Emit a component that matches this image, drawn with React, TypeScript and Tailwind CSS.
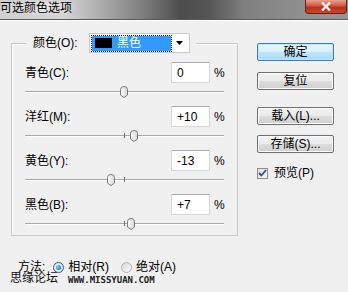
import React from 'react';

const rows = [
  { label: '青色(C):', value: '0', v: 0 },
  { label: '洋红(M):', value: '+10', v: 10 },
  { label: '黄色(Y):', value: '-13', v: -13 },
  { label: '黑色(B):', value: '+7', v: 7 },
];

function Thumb() {
  return (
    <svg width="8" height="12" viewBox="0 0 8 12">
      <defs>
        <linearGradient id="tg" x1="0" y1="0" x2="1" y2="0">
          <stop offset="0" stopColor="#ffffff" />
          <stop offset="1" stopColor="#d6d6d6" />
        </linearGradient>
      </defs>
      <path d="M0.5 3.5 Q0.5 0.5 4 0.5 Q7.5 0.5 7.5 3.5 V9 L4 11.5 L0.5 9 Z" fill="url(#tg)" stroke="#7a7a7a" />
    </svg>
  );
}

function Slider({ v }: { v: number }) {
  const left = 99 + v * 0.99 - 4;
  return (
    <div className="relative h-[20px]">
      <div className="pt-[8px]">
        <div className="h-[2px] border-t border-[#a8a8a8] bg-white" />
      </div>
      {v !== 0 && <div className="absolute left-[99px] top-[6px] w-px h-[5px] bg-[#707070]" />}
      <div className="absolute top-[3px] leading-none" style={{ left }}>
        <Thumb />
      </div>
    </div>
  );
}

function Btn({ label, primary }: { label: string; primary?: boolean }) {
  return (
    <div
      className={`h-[18px] w-[77px] rounded-[2px] border flex items-center justify-center leading-none ${
        primary
          ? 'border-[#3c7fb1] bg-[linear-gradient(#eaf6fd,#d9f0fc_50%,#bee6fd_51%,#a7d9f5)] shadow-[inset_0_0_0_1px_#bfe6f7]'
          : 'border-[#707070] bg-[linear-gradient(#f2f2f2,#ebebeb_50%,#dddddd_51%,#cfcfcf)] shadow-[inset_0_0_0_1px_#fcfcfc]'
      }`}
    >
      {label}
    </div>
  );
}

function Radio({ checked }: { checked?: boolean }) {
  return (
    <div
      className={`w-[11px] h-[11px] rounded-full border flex items-center justify-center ${
        checked ? 'border-[#2c628b] bg-[#dcecfc]' : 'border-[#b0b0b0] bg-[linear-gradient(135deg,#d8d8d8,#f8f8f8)]'
      }`}
    >
      {checked && <div className="w-[5px] h-[5px] rounded-full bg-[radial-gradient(circle_at_35%_35%,#8ad2ff,#1c5c8f)]" />}
    </div>
  );
}

export default function App() {
  return (
    <div className="relative w-[348px] h-[292px] overflow-hidden bg-[#f0f0f0] text-[12px] text-black font-['Liberation_Sans','Noto_Sans_CJK_SC',sans-serif]">
      {/* title bar */}
      <div className="h-[19px] flex items-start bg-[linear-gradient(90deg,#cfcfcf_0%,#d6d6d6_18%,#a8a8a8_30%,#7a7a7a_42%,#4c4c4c_52%,#555_60%,#7f7f7f_70%,#8e8e8e_85%,#969696_100%)]">
        <span className="pt-[1px] leading-[14px] text-[12px] bg-[radial-gradient(ellipse_at_center,rgba(255,255,255,0.55),rgba(255,255,255,0)_75%)] pr-[6px]">
          可选颜色选项
        </span>
        <div className="ml-auto mr-[1px] w-[42px] h-[14px] rounded-b-[4px] border border-t-0 border-[#6b1d12] bg-[linear-gradient(#e8a192,#d1573f_45%,#b8321c_55%,#c9452c)] flex items-center justify-center">
          <svg width="10" height="9" viewBox="0 0 10 9">
            <path d="M1 0.5 L9 8.5 M9 0.5 L1 8.5" stroke="#fff" strokeWidth="2.2" />
          </svg>
        </div>
      </div>
      <div className="h-[2px] border-t border-[#5a5a5a] bg-white" />

      <div className="flex pl-[11px]">
        {/* left column */}
        <div className="w-[227px] pt-[12px]">
          <div className="relative z-10 ml-[15px] w-[170px] h-[20px] bg-[#f0f0f0] flex items-center pl-[7px] pr-[6px]">
            <span className="leading-none">颜色(O):</span>
            <div className="ml-auto w-[101px] h-[20px] bg-white border border-[#c6c9ce] flex items-center pl-[2px] pr-[6px]">
              <div className="w-[79px] h-[15px] bg-[#3399ff] outline outline-1 outline-dotted outline-[#1a1a1a] flex items-center pl-[3px]">
                <div className="w-[17px] h-[10px] bg-black" />
                <span className="ml-[5px] text-white leading-none">黑色</span>
              </div>
              <svg className="ml-auto" width="7" height="4" viewBox="0 0 7 4">
                <path d="M0 0 H7 L3.5 4 Z" fill="#000" />
              </svg>
            </div>
          </div>

          <div className="-mt-[10px] h-[193px] border border-[#c4c9cc] shadow-[inset_1px_1px_0_#fff] pt-[18px] px-[13px]">
            {rows.map((r, i) => (
              <div key={r.label} className={i < rows.length - 1 ? 'mb-[3px]' : ''}>
                <div className="flex items-center h-[21px]">
                  <span className="flex-1 leading-none">{r.label}</span>
                  <div className="w-[39px] h-[21px] bg-white border border-[#d5d9de] border-t-[#abadb3] flex items-center pl-[5px] leading-none">
                    {r.value}
                  </div>
                  <span className="ml-[4px] w-[10px] leading-none">%</span>
                </div>
                <Slider v={r.v} />
              </div>
            ))}
          </div>

          <div className="mt-[25px] h-[12px] flex items-center pl-[7px]">
            <span className="leading-none">方法:</span>
            <div className="ml-[8px]"><Radio checked /></div>
            <span className="ml-[4px] leading-none">相对(R)</span>
            <div className="ml-[12px]"><Radio /></div>
            <span className="ml-[4px] leading-none">绝对(A)</span>
          </div>
        </div>

        {/* right column */}
        <div className="ml-[19px] w-[77px] pt-[22px] flex flex-col">
          <Btn label="确定" primary />
          <div className="mt-[11px]"><Btn label="复位" /></div>
          <div className="mt-[17px]"><Btn label="载入(L)..." /></div>
          <div className="mt-[10px]"><Btn label="存储(S)..." /></div>
          <div className="mt-[14px] flex items-center">
            <div className="w-[11px] h-[11px] border border-[#8f8f8f] bg-[linear-gradient(135deg,#dcdcdc,#fbfbfb)] flex items-center justify-center">
              <svg width="9" height="8" viewBox="0 0 9 8">
                <path d="M1 4 L3.5 6.5 L8 1" stroke="#3a4f8c" strokeWidth="1.8" fill="none" />
              </svg>
            </div>
            <span className="ml-[6px] leading-none">预览(P)</span>
          </div>
        </div>
      </div>

      {/* watermark */}
      <span className="absolute left-[10px] top-[272px] leading-none text-[12px] text-[#111]">思缘论坛</span>
      <span className="absolute left-[68px] top-[276px] leading-none text-[9px] font-bold text-[#222] font-['DejaVu_Sans_Mono',monospace]">
        WWW.MISSYUAN.COM
      </span>
    </div>
  );
}
